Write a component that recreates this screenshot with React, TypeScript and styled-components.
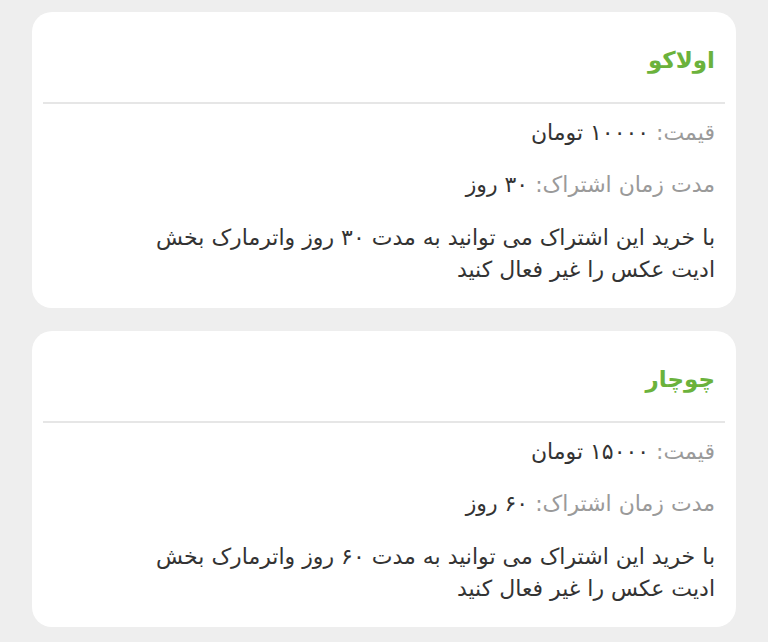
import styled, { createGlobalStyle } from 'styled-components'

const GlobalStyle = createGlobalStyle`
  html, body {
    margin: 0;
    padding: 0;
    background: #eeeeee;
  }
  body {
    font-family: "DejaVu Sans", "Noto Sans", sans-serif;
  }
`

const Page = styled.div`
  direction: rtl;
  padding: 12px 32px;
  display: flex;
  flex-direction: column;
  row-gap: 23px;
`

const Card = styled.div`
  background: #fff;
  border-radius: 20px;
  padding: 0 11px 22px;
`

const Title = styled.h2`
  margin: 0;
  padding: 32px 10px 26px;
  font-size: 23px;
  line-height: 32px;
  font-weight: bold;
  color: #6bb23c;
`

const Divider = styled.hr`
  margin: 0;
  border: none;
  height: 2px;
  background: #e6e6e6;
`

const Body = styled.div`
  padding: 13px 10px 0;
  display: flex;
  flex-direction: column;
  row-gap: 20px;
`

const Row = styled.div`
  font-size: 22px;
  line-height: 32px;
  color: #333;
`

const Label = styled.span`
  color: #9a9a9a;
`

const Description = styled.p`
  margin: 1px 0 0;
  font-size: 22px;
  line-height: 32px;
  color: #333;
  padding-left: 77px;
`

const plans = [
  { name: 'اولاکو', price: '۱۰۰۰۰', days: '۳۰' },
  { name: 'چوچار', price: '۱۵۰۰۰', days: '۶۰' },
]

function App() {
  return (
    <>
      <GlobalStyle />
      <Page>
        {plans.map((p) => (
          <Card key={p.name}>
            <Title>{p.name}</Title>
            <Divider />
            <Body>
              <Row>
                <Label>قیمت: </Label>
                {`${p.price} تومان`}
              </Row>
              <Row>
                <Label>مدت زمان اشتراک: </Label>
                {`${p.days} روز`}
              </Row>
              <Description>
                {`با خرید این اشتراک می توانید به مدت ${p.days} روز واترمارک بخش ادیت عکس را غیر فعال کنید`}
              </Description>
            </Body>
          </Card>
        ))}
      </Page>
    </>
  )
}

export default App
